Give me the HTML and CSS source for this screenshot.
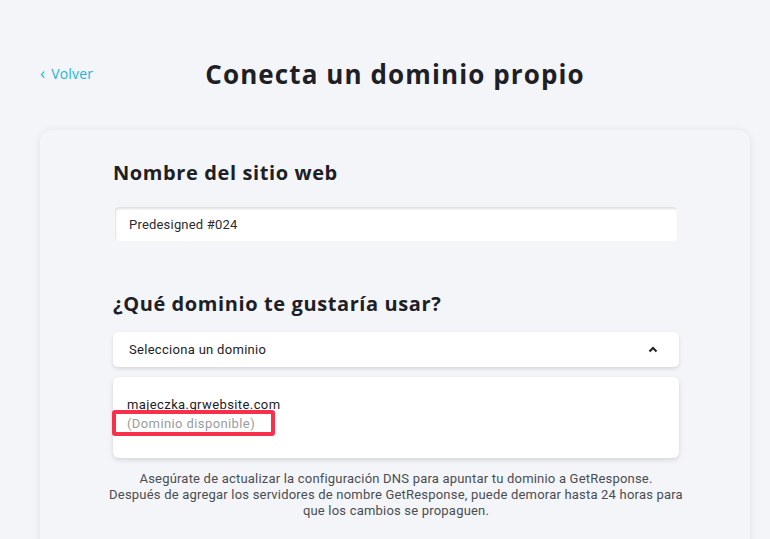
FILE: index.html
```html
<!DOCTYPE html>
<html lang="es">
<head>
    <meta charset="UTF-8">
    <meta name="viewport" content="width=device-width, initial-scale=1.0">
    <title>Conecta un dominio propio</title>
    <link rel="stylesheet" href="styles.css">
</head>
<body>
    <header class="top">
        <a class="back" href="#"><span class="back-arrow">&lsaquo;</span> Volver</a>
        <h1 class="title">Conecta un dominio propio</h1>
        <span></span>
    </header>

    <main class="card">
        <h2 class="section-title">Nombre del sitio web</h2>
        <div class="input">Predesigned #024</div>

        <h2 class="section-title second">¿Qué dominio te gustaría usar?</h2>
        <div class="select">
            <span>Selecciona un dominio</span>
            <svg class="chevron" width="10" height="7" viewBox="0 0 10 7">
                <path d="M1.5 5.5 L5 2 L8.5 5.5" fill="none" stroke="#1d2024" stroke-width="2"/>
            </svg>
        </div>
        <ul class="options">
            <li class="option">
                <div class="domain">majeczka.grwebsite.com</div>
                <div class="status">(Dominio disponible)</div>
                <span class="highlight"></span>
            </li>
        </ul>

        <p class="note">
            Asegúrate de actualizar la configuración DNS para apuntar tu dominio a GetResponse.<br>
            Después de agregar los servidores de nombre GetResponse, puede demorar hasta 24 horas para<br>
            que los cambios se propaguen.
        </p>
    </main>
</body>
</html>
```

FILE: styles.css
```css
* {
    margin: 0;
    padding: 0;
    box-sizing: border-box;
}
body {
    font-family: Roboto, "Liberation Sans", sans-serif;
    background-color: #f4f5f9;
    color: #1d2024;
    height: 539px;
    overflow: hidden;
    padding: 0 20px 0 40px;
}
.top {
    display: grid;
    grid-template-columns: 1fr auto 1fr;
    align-items: center;
    height: 130px;
    padding-top: 18px;
}
.back {
    color: #22b5dc;
    text-decoration: none;
    font-size: 14px;
    font-family: "Open Sans", sans-serif;
    letter-spacing: 0.2px;
    margin-top: -3px;
}
.back-arrow {
    font-size: 17px;
    margin-right: 2px;
}
.title {
    font-family: "Open Sans", sans-serif;
    font-weight: 700;
    font-size: 26px;
    letter-spacing: 1.1px;
    color: #1d2024;
}
.card {
    background-color: #f4f5f9;
    border-radius: 12px;
    box-shadow: 0 1px 8px rgba(20, 30, 60, 0.09);
    height: 430px;
    padding: 28px 71px 0 73px;
}
.section-title {
    font-family: "Open Sans", sans-serif;
    font-weight: 700;
    font-size: 20px;
    letter-spacing: 0.6px;
    color: #1d2024;
    line-height: 30px;
}
.section-title.second {
    margin-top: 48px;
}
.input {
    margin: 19px 2px 0 2px;
    height: 34px;
    background: #fff;
    border-radius: 4px;
    box-shadow: inset 1px 2px 2px rgba(0, 0, 0, 0.12);
    font-size: 13px;
    padding: 10px 14px;
    color: #2a2d31;
    letter-spacing: 0.2px;
}
.select {
    margin-top: 13px;
    height: 35px;
    background: #fff;
    border-radius: 5px;
    box-shadow: 0 2px 4px rgba(0, 0, 0, 0.12);
    display: flex;
    justify-content: space-between;
    align-items: center;
    padding: 0 21px 0 16px;
    font-size: 13px;
    color: #1d2024;
    letter-spacing: 0.3px;
}
.chevron {
    display: block;
}
.options {
    list-style: none;
    margin-top: 10px;
    background: #fff;
    border-radius: 6px;
    box-shadow: 0 2px 5px rgba(0, 0, 0, 0.13);
    height: 81px;
}
.option {
    position: relative;
    padding: 19px 14px;
    font-size: 13px;
    line-height: 18px;
    letter-spacing: 0.4px;
}
.domain {
    color: #1d2024;
}
.status {
    color: #9a9ca0;
    margin-top: 1px;
}
.highlight {
    position: absolute;
    left: -1px;
    top: 33px;
    width: 163px;
    height: 26px;
    border: 4px solid #f9304c;
    border-radius: 3px;
}
.note {
    margin: 13px -40px 0;
    text-align: center;
    font-size: 13px;
    line-height: 16px;
    color: #4a4d52;
    letter-spacing: 0.2px;
}
```
